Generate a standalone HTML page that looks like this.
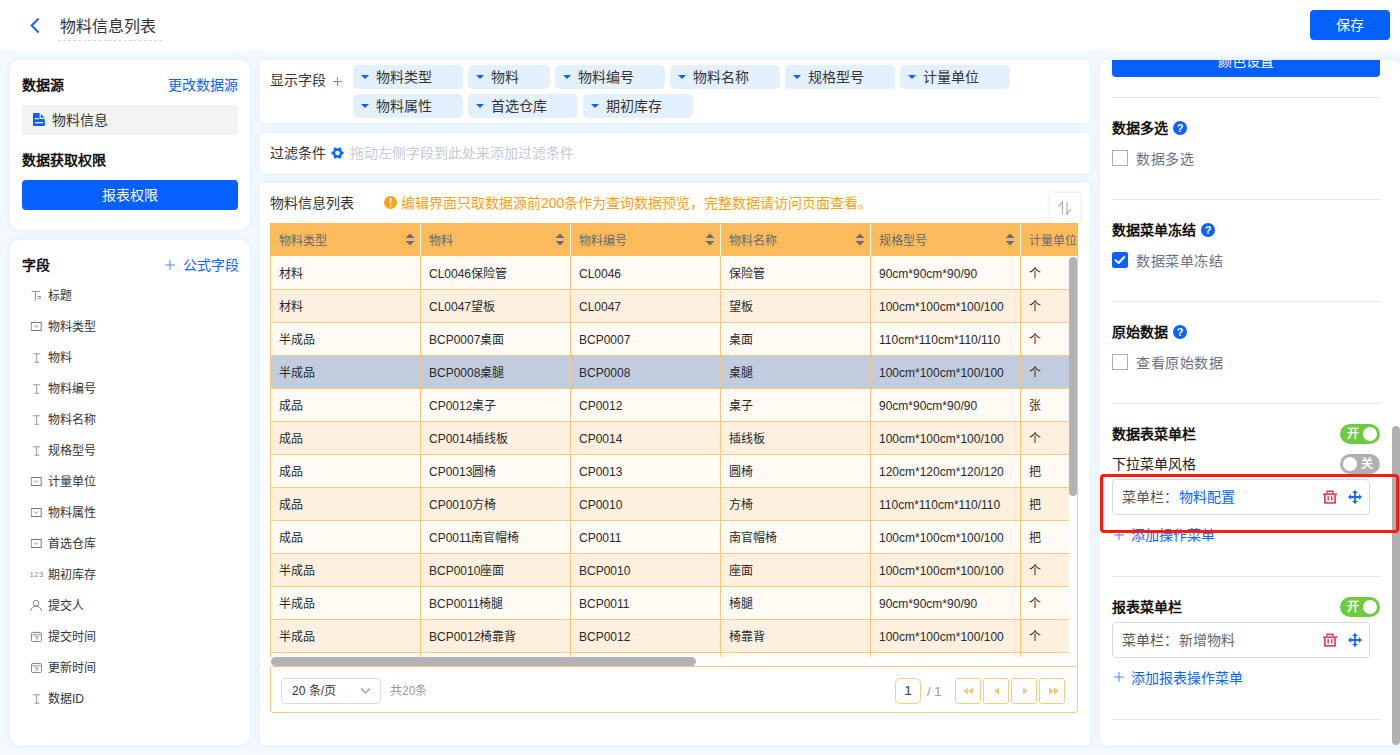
<!DOCTYPE html>
<html lang="zh-CN"><head><meta charset="utf-8">
<style>
*{box-sizing:border-box;margin:0;padding:0}
html,body{width:1400px;height:755px;overflow:hidden}
body{font-family:"Liberation Sans",sans-serif;background:#F4F9FE;color:#333;position:relative;font-size:13px}
.abs{position:absolute}
.hdr{left:0;top:0;width:1400px;height:50px;background:#fff}
.panel{position:absolute;background:#fff;border-radius:10px;box-shadow:0 0 6px rgba(150,205,255,.3)}
.t{position:absolute;white-space:nowrap;line-height:1}
.blue{color:#0B63FF}
.btn{position:absolute;background:#0560FF;border-radius:4px;color:#fff;text-align:center}
/* table */
.tbl{position:absolute;left:270px;top:223px;width:808px;height:490px;overflow:hidden}
.th{position:absolute;top:0;height:33px;background:#FBBB5A}
.cell{position:absolute;white-space:nowrap;font-size:12px;line-height:1}
.row{position:absolute;left:0;width:799px;height:33px;border-bottom:1px solid #F8C97F}
.vl{position:absolute;width:1px;background:#F8C97F}
.tag{position:absolute;height:24px;background:#E3F1FE;border-radius:5px}
.tag i{position:absolute;left:8px;top:10px;width:0;height:0;border-left:4px solid transparent;border-right:4px solid transparent;border-top:4.5px solid #0F5FFF}
.tag span{position:absolute;left:23px;top:5px;font-size:14px;line-height:1;color:#333;white-space:nowrap}
.fi{position:absolute;left:48px;font-size:12px;line-height:1;color:#333;white-space:nowrap}
.ic{position:absolute;left:31px}
.div{position:absolute;left:1112px;width:268px;height:1px;background:#E6E6E6}
.sec{position:absolute;left:1112px;font-size:14px;font-weight:bold;color:#111;line-height:1;white-space:nowrap}
.q{position:absolute;width:14px;height:14px;border-radius:50%;background:#0B62FF;color:#fff;font-size:11px;font-weight:bold;text-align:center;line-height:14px}
.cb{position:absolute;left:1112px;width:16px;height:16px;border:1px solid #A9ADBA;border-radius:0;background:#fff}
.cbl{position:absolute;left:1136px;font-size:14px;letter-spacing:0.6px;color:#6A7282;line-height:1;white-space:nowrap}
.tog{position:absolute;left:1340px;width:40px;height:20px;border-radius:10px}
.menu{position:absolute;left:1112px;width:258px;height:36px;border:1px solid #D9D9D9;border-radius:4px;background:#fff}
.pbtn{position:absolute;top:678px;width:26px;height:26px;border:1px solid #FACB84;border-radius:3px;background:#fff}
</style></head><body>

<!-- header -->
<div class="abs hdr"></div>
<svg class="abs" style="left:28px;top:17px" width="14" height="17" viewBox="0 0 14 17"><path d="M10.6 1.6 L3.7 8.5 L10.6 15.4" fill="none" stroke="#1F62FF" stroke-width="2.1"/></svg>
<div class="t" style="left:60px;top:18.5px;font-size:16px;color:#333">物料信息列表</div>
<div class="abs" style="left:58px;top:40px;width:104px;height:0;border-top:1px dashed #D6D6D6"></div>
<div class="btn" style="left:1310px;top:10px;width:80px;height:30px;font-size:14px;line-height:30px">保存</div>

<!-- left panel 1 -->
<div class="panel" style="left:10px;top:60px;width:240px;height:170px"></div>
<div class="t" style="left:22px;top:78px;font-size:14px;font-weight:bold;color:#111">数据源</div>
<div class="t blue" style="left:168px;top:78px;font-size:14px">更改数据源</div>
<div class="abs" style="left:22px;top:105px;width:216px;height:30px;background:#F3F3F3;border-radius:2px"></div>
<svg class="abs" style="left:33px;top:113px" width="12" height="13" viewBox="0 0 12 13"><path d="M0.4 0H6.6V5.9H11.8V12.6Q11.8 13 11.4 13H0.4Q0 13 0 12.6V0.4Q0 0 0.4 0Z" fill="#0B5FFF"/><path d="M7.9 0.9L11.5 4.7H7.9Z" fill="#0B5FFF"/><rect x="1.8" y="5.1" width="3.9" height="1.2" fill="#fff"/><rect x="1.8" y="9.1" width="8.2" height="1.2" fill="#fff"/></svg>
<div class="t" style="left:52px;top:113px;font-size:14px;color:#333">物料信息</div>
<div class="t" style="left:22px;top:153px;font-size:14px;font-weight:bold;color:#111">数据获取权限</div>
<div class="btn" style="left:22px;top:180px;width:216px;height:30px;font-size:14px;line-height:30px">报表权限</div>

<!-- left panel 2 -->
<div class="panel" style="left:10px;top:240px;width:240px;height:505px"></div>
<div class="t" style="left:22px;top:258px;font-size:14px;font-weight:bold;color:#111">字段</div>
<svg class="abs" style="left:165px;top:260px" width="10" height="10" viewBox="0 0 10 10"><path d="M5 0V10M0 5H10" stroke="#4F7FFF" stroke-width="1"/></svg>
<div class="t blue" style="left:183px;top:258px;font-size:14px">公式字段</div>
<svg class="ic" style="top:289px" width="12" height="13" viewBox="0 0 12 13"><path d="M0.6 2.4H9M4.4 2.4V12M6.6 7.5H10M6.6 9.4H10" fill="none" stroke="#8C8C8C" stroke-width="1"/></svg>
<div class="fi" style="top:290px">标题</div>
<svg class="ic" style="top:320px" width="12" height="13" viewBox="0 0 12 13"><rect x="0.2" y="2.5" width="10" height="8" fill="none" stroke="#777" stroke-width="1"/><path d="M3.4 5.4L5.2 7.4L7 5.4" fill="none" stroke="#888" stroke-width="0.9"/></svg>
<div class="fi" style="top:321px">物料类型</div>
<svg class="ic" style="top:351px" width="12" height="13" viewBox="0 0 12 13"><path d="M1.9 2.8H9.2M5.6 2.8V11.3M3.4 11.3H8.1" fill="none" stroke="#999" stroke-width="1"/></svg>
<div class="fi" style="top:352px">物料</div>
<svg class="ic" style="top:382px" width="12" height="13" viewBox="0 0 12 13"><path d="M1.9 2.8H9.2M5.6 2.8V11.3M3.4 11.3H8.1" fill="none" stroke="#999" stroke-width="1"/></svg>
<div class="fi" style="top:383px">物料编号</div>
<svg class="ic" style="top:413px" width="12" height="13" viewBox="0 0 12 13"><path d="M1.9 2.8H9.2M5.6 2.8V11.3M3.4 11.3H8.1" fill="none" stroke="#999" stroke-width="1"/></svg>
<div class="fi" style="top:414px">物料名称</div>
<svg class="ic" style="top:444px" width="12" height="13" viewBox="0 0 12 13"><path d="M1.9 2.8H9.2M5.6 2.8V11.3M3.4 11.3H8.1" fill="none" stroke="#999" stroke-width="1"/></svg>
<div class="fi" style="top:445px">规格型号</div>
<svg class="ic" style="top:475px" width="12" height="13" viewBox="0 0 12 13"><rect x="0.2" y="2.5" width="10" height="8" fill="none" stroke="#777" stroke-width="1"/><path d="M3.4 5.4L5.2 7.4L7 5.4" fill="none" stroke="#888" stroke-width="0.9"/></svg>
<div class="fi" style="top:476px">计量单位</div>
<svg class="ic" style="top:506px" width="12" height="13" viewBox="0 0 12 13"><rect x="0.2" y="2.5" width="10" height="8" fill="none" stroke="#777" stroke-width="1"/><path d="M3.4 5.4L5.2 7.4L7 5.4" fill="none" stroke="#888" stroke-width="0.9"/></svg>
<div class="fi" style="top:507px">物料属性</div>
<svg class="ic" style="top:537px" width="12" height="13" viewBox="0 0 12 13"><rect x="0.2" y="2.5" width="10" height="8" fill="none" stroke="#777" stroke-width="1"/><path d="M3.4 5.4L5.2 7.4L7 5.4" fill="none" stroke="#888" stroke-width="0.9"/></svg>
<div class="fi" style="top:538px">首选仓库</div>
<div class="t" style="left:29.5px;top:570.5px;font-size:8px;color:#8A8A8A;letter-spacing:0.3px">123</div>
<div class="fi" style="top:569px">期初库存</div>
<svg class="ic" style="top:599px;overflow:visible" width="12" height="13" viewBox="0 0 12 13"><circle cx="5.1" cy="4.2" r="2.8" fill="none" stroke="#8A8A8A" stroke-width="1"/><path d="M-0.4 12C0.2 8.8 2.4 7.3 5.1 7.3C7.8 7.3 10 8.8 10.6 12" fill="none" stroke="#8A8A8A" stroke-width="1"/></svg>
<div class="fi" style="top:600px">提交人</div>
<svg class="ic" style="top:630px" width="12" height="13" viewBox="0 0 12 13"><rect x="0.5" y="2.5" width="10" height="9" rx="1.2" fill="none" stroke="#8A8A8A" stroke-width="1"/><path d="M0.5 4.8H10.5M3 1.6V3.2M8 1.6V3.2M3.8 6.8H6.9L5.2 10.4" fill="none" stroke="#8A8A8A" stroke-width="0.9"/></svg>
<div class="fi" style="top:631px">提交时间</div>
<svg class="ic" style="top:661px" width="12" height="13" viewBox="0 0 12 13"><rect x="0.5" y="2.5" width="10" height="9" rx="1.2" fill="none" stroke="#8A8A8A" stroke-width="1"/><path d="M0.5 4.8H10.5M3 1.6V3.2M8 1.6V3.2M3.8 6.8H6.9L5.2 10.4" fill="none" stroke="#8A8A8A" stroke-width="0.9"/></svg>
<div class="fi" style="top:662px">更新时间</div>
<svg class="ic" style="top:692px" width="12" height="13" viewBox="0 0 12 13"><path d="M1.9 2.8H9.2M5.6 2.8V11.3M3.4 11.3H8.1" fill="none" stroke="#999" stroke-width="1"/></svg>
<div class="fi" style="top:693px">数据ID</div>

<!-- display fields panel -->
<div class="panel" style="left:260px;top:60px;width:830px;height:63px;border-radius:4px"></div>
<div class="t" style="left:270px;top:73px;font-size:14px;color:#333">显示字段</div>
<svg class="abs" style="left:332.5px;top:76.5px" width="9" height="9" viewBox="0 0 9 9"><path d="M4.5 0V9M0 4.5H9" stroke="#8A8A8A" stroke-width="1.1"/></svg>
<div class="tag" style="left:353px;top:65px;width:110px"><i></i><span>物料类型</span></div>
<div class="tag" style="left:468px;top:65px;width:82px"><i></i><span>物料</span></div>
<div class="tag" style="left:555px;top:65px;width:110px"><i></i><span>物料编号</span></div>
<div class="tag" style="left:670px;top:65px;width:110px"><i></i><span>物料名称</span></div>
<div class="tag" style="left:785px;top:65px;width:110px"><i></i><span>规格型号</span></div>
<div class="tag" style="left:900px;top:65px;width:110px"><i></i><span>计量单位</span></div>
<div class="tag" style="left:353px;top:94px;width:110px"><i></i><span>物料属性</span></div>
<div class="tag" style="left:468px;top:94px;width:110px"><i></i><span>首选仓库</span></div>
<div class="tag" style="left:583px;top:94px;width:110px"><i></i><span>期初库存</span></div>

<!-- filter panel -->
<div class="panel" style="left:260px;top:133px;width:830px;height:40px;border-radius:4px"></div>
<div class="t" style="left:270px;top:146px;font-size:14px;color:#333">过滤条件</div>
<svg class="abs" style="left:331px;top:147px" width="13" height="12" viewBox="-6.5 -6 13 12" overflow="visible"><g fill="#1366FF" transform="rotate(30)"><circle r="4.6"/><g id="gt"><rect x="-1.6" y="-6" width="3.2" height="3" rx="0.8"/></g><rect x="-1.6" y="-6" width="3.2" height="3" rx="0.8" transform="rotate(60)"/><rect x="-1.6" y="-6" width="3.2" height="3" rx="0.8" transform="rotate(120)"/><rect x="-1.6" y="-6" width="3.2" height="3" rx="0.8" transform="rotate(180)"/><rect x="-1.6" y="-6" width="3.2" height="3" rx="0.8" transform="rotate(240)"/><rect x="-1.6" y="-6" width="3.2" height="3" rx="0.8" transform="rotate(300)"/></g><circle r="2.3" fill="#fff"/></svg>
<div class="t" style="left:350px;top:146px;font-size:14px;color:#C5CAD3">拖动左侧字段到此处来添加过滤条件</div>

<!-- table panel -->
<div class="panel" style="left:260px;top:183px;width:830px;height:562px;border-radius:4px"></div>
<div class="t" style="left:270px;top:196px;font-size:14px;color:#333">物料信息列表</div>
<svg class="abs" style="left:384px;top:196px" width="13" height="13" viewBox="0 0 13 13"><circle cx="6.5" cy="6.5" r="6.5" fill="#F9A20C"/><path d="M5.5 2.2H7.5L7 8.6H6Z" fill="#fff"/><rect x="5.8" y="9.6" width="1.4" height="1.5" fill="#fff"/></svg>
<div class="t" style="left:401px;top:196px;font-size:14px;color:#F8A114">编辑界面只取数据源前200条作为查询数据预览，完整数据请访问页面查看。</div>
<div class="abs" style="left:1050px;top:193px;width:30px;height:30px;background:#fff;box-shadow:0 0 4px rgba(0,0,0,.12)"></div>
<svg class="abs" style="left:1050px;top:193px" width="30" height="30" viewBox="0 0 30 30"><path d="M8.3 13.3L12.5 9V21.2M17 9V21.2L20.7 16.2" fill="none" stroke="#A8A8A8" stroke-width="1.1"/></svg>

<div class="abs" style="left:270px;top:223px;width:808px;height:33px;background:#FBBB5A"></div>
<div class="cell" style="left:279px;top:235px;color:#646A76">物料类型</div>
<svg class="abs" style="left:405px;top:233px" width="10" height="13" viewBox="0 0 10 13"><path d="M5 0.5L9.5 5H0.5Z M0.5 8H9.5L5 12.5Z" fill="#5F6E86"/></svg>
<div class="cell" style="left:429px;top:235px;color:#646A76">物料</div>
<svg class="abs" style="left:555px;top:233px" width="10" height="13" viewBox="0 0 10 13"><path d="M5 0.5L9.5 5H0.5Z M0.5 8H9.5L5 12.5Z" fill="#5F6E86"/></svg>
<div class="abs" style="left:420px;top:224px;width:1px;height:32px;background:#FFF8EE"></div>
<div class="cell" style="left:579px;top:235px;color:#646A76">物料编号</div>
<svg class="abs" style="left:705px;top:233px" width="10" height="13" viewBox="0 0 10 13"><path d="M5 0.5L9.5 5H0.5Z M0.5 8H9.5L5 12.5Z" fill="#5F6E86"/></svg>
<div class="abs" style="left:570px;top:224px;width:1px;height:32px;background:#FFF8EE"></div>
<div class="cell" style="left:729px;top:235px;color:#646A76">物料名称</div>
<svg class="abs" style="left:855px;top:233px" width="10" height="13" viewBox="0 0 10 13"><path d="M5 0.5L9.5 5H0.5Z M0.5 8H9.5L5 12.5Z" fill="#5F6E86"/></svg>
<div class="abs" style="left:720px;top:224px;width:1px;height:32px;background:#FFF8EE"></div>
<div class="cell" style="left:879px;top:235px;color:#646A76">规格型号</div>
<svg class="abs" style="left:1005px;top:233px" width="10" height="13" viewBox="0 0 10 13"><path d="M5 0.5L9.5 5H0.5Z M0.5 8H9.5L5 12.5Z" fill="#5F6E86"/></svg>
<div class="abs" style="left:870px;top:224px;width:1px;height:32px;background:#FFF8EE"></div>
<div class="cell" style="left:1029px;top:235px;color:#646A76">计量单位</div>
<div class="abs" style="left:1020px;top:224px;width:1px;height:32px;background:#FFF8EE"></div>
<div class="abs" style="left:270px;top:257px;width:799px;height:33px;background:#FFFBF4;border-bottom:1px solid #F8C97F"></div>
<div class="cell" style="left:279px;top:268px;color:#282828">材料</div>
<div class="cell" style="left:429px;top:268px;color:#282828">CL0046保险管</div>
<div class="cell" style="left:579px;top:268px;color:#282828">CL0046</div>
<div class="cell" style="left:729px;top:268px;color:#282828">保险管</div>
<div class="cell" style="left:879px;top:268px;color:#282828">90cm*90cm*90/90</div>
<div class="cell" style="left:1029px;top:268px;color:#282828">个</div>
<div class="abs" style="left:270px;top:290px;width:799px;height:33px;background:#FDF0DF;border-bottom:1px solid #F8C97F"></div>
<div class="cell" style="left:279px;top:301px;color:#282828">材料</div>
<div class="cell" style="left:429px;top:301px;color:#282828">CL0047望板</div>
<div class="cell" style="left:579px;top:301px;color:#282828">CL0047</div>
<div class="cell" style="left:729px;top:301px;color:#282828">望板</div>
<div class="cell" style="left:879px;top:301px;color:#282828">100cm*100cm*100/100</div>
<div class="cell" style="left:1029px;top:301px;color:#282828">个</div>
<div class="abs" style="left:270px;top:323px;width:799px;height:33px;background:#FFFBF4;border-bottom:1px solid #F8C97F"></div>
<div class="cell" style="left:279px;top:334px;color:#282828">半成品</div>
<div class="cell" style="left:429px;top:334px;color:#282828">BCP0007桌面</div>
<div class="cell" style="left:579px;top:334px;color:#282828">BCP0007</div>
<div class="cell" style="left:729px;top:334px;color:#282828">桌面</div>
<div class="cell" style="left:879px;top:334px;color:#282828">110cm*110cm*110/110</div>
<div class="cell" style="left:1029px;top:334px;color:#282828">个</div>
<div class="abs" style="left:270px;top:356px;width:799px;height:33px;background:#C2CCDF;border-bottom:1px solid #F8C97F"></div>
<div class="cell" style="left:279px;top:367px;color:#282828">半成品</div>
<div class="cell" style="left:429px;top:367px;color:#282828">BCP0008桌腿</div>
<div class="cell" style="left:579px;top:367px;color:#282828">BCP0008</div>
<div class="cell" style="left:729px;top:367px;color:#282828">桌腿</div>
<div class="cell" style="left:879px;top:367px;color:#282828">100cm*100cm*100/100</div>
<div class="cell" style="left:1029px;top:367px;color:#282828">个</div>
<div class="abs" style="left:270px;top:389px;width:799px;height:33px;background:#FFFBF4;border-bottom:1px solid #F8C97F"></div>
<div class="cell" style="left:279px;top:400px;color:#282828">成品</div>
<div class="cell" style="left:429px;top:400px;color:#282828">CP0012桌子</div>
<div class="cell" style="left:579px;top:400px;color:#282828">CP0012</div>
<div class="cell" style="left:729px;top:400px;color:#282828">桌子</div>
<div class="cell" style="left:879px;top:400px;color:#282828">90cm*90cm*90/90</div>
<div class="cell" style="left:1029px;top:400px;color:#282828">张</div>
<div class="abs" style="left:270px;top:422px;width:799px;height:33px;background:#FDF0DF;border-bottom:1px solid #F8C97F"></div>
<div class="cell" style="left:279px;top:433px;color:#282828">成品</div>
<div class="cell" style="left:429px;top:433px;color:#282828">CP0014插线板</div>
<div class="cell" style="left:579px;top:433px;color:#282828">CP0014</div>
<div class="cell" style="left:729px;top:433px;color:#282828">插线板</div>
<div class="cell" style="left:879px;top:433px;color:#282828">100cm*100cm*100/100</div>
<div class="cell" style="left:1029px;top:433px;color:#282828">个</div>
<div class="abs" style="left:270px;top:455px;width:799px;height:33px;background:#FFFBF4;border-bottom:1px solid #F8C97F"></div>
<div class="cell" style="left:279px;top:466px;color:#282828">成品</div>
<div class="cell" style="left:429px;top:466px;color:#282828">CP0013圆椅</div>
<div class="cell" style="left:579px;top:466px;color:#282828">CP0013</div>
<div class="cell" style="left:729px;top:466px;color:#282828">圆椅</div>
<div class="cell" style="left:879px;top:466px;color:#282828">120cm*120cm*120/120</div>
<div class="cell" style="left:1029px;top:466px;color:#282828">把</div>
<div class="abs" style="left:270px;top:488px;width:799px;height:33px;background:#FDF0DF;border-bottom:1px solid #F8C97F"></div>
<div class="cell" style="left:279px;top:499px;color:#282828">成品</div>
<div class="cell" style="left:429px;top:499px;color:#282828">CP0010方椅</div>
<div class="cell" style="left:579px;top:499px;color:#282828">CP0010</div>
<div class="cell" style="left:729px;top:499px;color:#282828">方椅</div>
<div class="cell" style="left:879px;top:499px;color:#282828">110cm*110cm*110/110</div>
<div class="cell" style="left:1029px;top:499px;color:#282828">把</div>
<div class="abs" style="left:270px;top:521px;width:799px;height:33px;background:#FFFBF4;border-bottom:1px solid #F8C97F"></div>
<div class="cell" style="left:279px;top:532px;color:#282828">成品</div>
<div class="cell" style="left:429px;top:532px;color:#282828">CP0011南官帽椅</div>
<div class="cell" style="left:579px;top:532px;color:#282828">CP0011</div>
<div class="cell" style="left:729px;top:532px;color:#282828">南官帽椅</div>
<div class="cell" style="left:879px;top:532px;color:#282828">100cm*100cm*100/100</div>
<div class="cell" style="left:1029px;top:532px;color:#282828">把</div>
<div class="abs" style="left:270px;top:554px;width:799px;height:33px;background:#FDF0DF;border-bottom:1px solid #F8C97F"></div>
<div class="cell" style="left:279px;top:565px;color:#282828">半成品</div>
<div class="cell" style="left:429px;top:565px;color:#282828">BCP0010座面</div>
<div class="cell" style="left:579px;top:565px;color:#282828">BCP0010</div>
<div class="cell" style="left:729px;top:565px;color:#282828">座面</div>
<div class="cell" style="left:879px;top:565px;color:#282828">100cm*100cm*100/100</div>
<div class="cell" style="left:1029px;top:565px;color:#282828">个</div>
<div class="abs" style="left:270px;top:587px;width:799px;height:33px;background:#FFFBF4;border-bottom:1px solid #F8C97F"></div>
<div class="cell" style="left:279px;top:598px;color:#282828">半成品</div>
<div class="cell" style="left:429px;top:598px;color:#282828">BCP0011椅腿</div>
<div class="cell" style="left:579px;top:598px;color:#282828">BCP0011</div>
<div class="cell" style="left:729px;top:598px;color:#282828">椅腿</div>
<div class="cell" style="left:879px;top:598px;color:#282828">90cm*90cm*90/90</div>
<div class="cell" style="left:1029px;top:598px;color:#282828">个</div>
<div class="abs" style="left:270px;top:620px;width:799px;height:33px;background:#FDF0DF;border-bottom:1px solid #F8C97F"></div>
<div class="cell" style="left:279px;top:631px;color:#282828">半成品</div>
<div class="cell" style="left:429px;top:631px;color:#282828">BCP0012椅靠背</div>
<div class="cell" style="left:579px;top:631px;color:#282828">BCP0012</div>
<div class="cell" style="left:729px;top:631px;color:#282828">椅靠背</div>
<div class="cell" style="left:879px;top:631px;color:#282828">100cm*100cm*100/100</div>
<div class="cell" style="left:1029px;top:631px;color:#282828">个</div>
<div class="abs" style="left:270px;top:653px;width:799px;height:4px;background:#FFFBF4"></div>
<div class="abs" style="left:270px;top:256px;width:799px;height:1px;background:#FFFBF4"></div>
<div class="abs" style="left:270px;top:256px;width:1px;height:401px;background:#F8C97F"></div>
<div class="abs" style="left:420px;top:256px;width:1px;height:401px;background:#F8C97F"></div>
<div class="abs" style="left:570px;top:256px;width:1px;height:401px;background:#F8C97F"></div>
<div class="abs" style="left:720px;top:256px;width:1px;height:401px;background:#F8C97F"></div>
<div class="abs" style="left:870px;top:256px;width:1px;height:401px;background:#F8C97F"></div>
<div class="abs" style="left:1020px;top:256px;width:1px;height:401px;background:#F8C97F"></div>
<div class="abs" style="left:1069px;top:256px;width:8px;height:410px;background:#fff"></div>
<div class="abs" style="left:1077px;top:256px;width:1px;height:410px;background:#F8C97F"></div>
<div class="abs" style="left:1069px;top:257px;width:8px;height:239px;background:#B3B3B3;border-radius:4px"></div>
<div class="abs" style="left:271px;top:657px;width:425px;height:9px;background:#B3B3B3;border-radius:4.5px"></div>
<div class="abs" style="left:270px;top:666px;width:808px;height:47px;border:1px solid #F8C97F;border-radius:0 0 3px 3px;background:#fff"></div>
<div class="abs" style="left:281px;top:678px;width:100px;height:26px;border:1px solid #DCDCDC;border-radius:4px"></div>
<div class="cell" style="left:292px;top:685px;font-size:12px;color:#333">20 条/页</div>
<svg class="abs" style="left:360px;top:687px" width="11" height="8" viewBox="0 0 11 8"><path d="M1 1.5L5.5 6L10 1.5" fill="none" stroke="#999" stroke-width="1.2"/></svg>
<div class="cell" style="left:390px;top:685px;font-size:12px;color:#999">共20条</div>
<div class="abs" style="left:895px;top:678px;width:26px;height:26px;border:1px solid #FACB84;border-radius:5px;text-align:center;line-height:24px;font-size:13px;color:#333">1</div>
<div class="cell" style="left:927px;top:685px;font-size:13px;color:#999">/ 1</div>
<div class="pbtn" style="left:955px"><svg class="abs" style="left:0;top:4px" width="26" height="16" viewBox="0 0 26 16"><path d="M7 8L12 4.5V11.5Z M12 8L17 4.5V11.5Z" fill="#FBC57A"/></svg></div>
<div class="pbtn" style="left:983px"><svg class="abs" style="left:0;top:4px" width="26" height="16" viewBox="0 0 26 16"><path d="M10 8L15 4.5V11.5Z" fill="#FBC57A"/></svg></div>
<div class="pbtn" style="left:1011px"><svg class="abs" style="left:0;top:4px" width="26" height="16" viewBox="0 0 26 16"><path d="M16 8L11 4.5V11.5Z" fill="#FBC57A"/></svg></div>
<div class="pbtn" style="left:1039px"><svg class="abs" style="left:0;top:4px" width="26" height="16" viewBox="0 0 26 16"><path d="M14 8L9 4.5V11.5Z M19 8L14 4.5V11.5Z" fill="#FBC57A"/></svg></div>

<!-- right panel -->
<div class="panel" style="left:1100px;top:60px;width:300px;height:685px;border-radius:8px 8px 0 8px;overflow:hidden"><div class="btn" style="left:12px;top:-14px;width:268px;height:31px;font-size:14px;line-height:30px;border-radius:0 0 4px 4px;background:#0660FF">颜色设置</div></div>
<div class="div" style="top:97px"></div>
<div class="sec" style="top:121px">数据多选</div>
<div class="q" style="left:1173px;top:121px">?</div>
<div class="cb" style="top:150px"></div>
<div class="cbl" style="top:152px">数据多选</div>
<div class="div" style="top:199px"></div>
<div class="sec" style="top:223px">数据菜单冻结</div>
<div class="q" style="left:1201px;top:223px">?</div>
<div class="cb" style="top:252px;background:#0B62FF;border-color:#0B62FF;border-radius:2px"><svg width="14" height="14" viewBox="0 0 14 14" style="position:absolute;left:0;top:0"><path d="M2.6 7.2L5.6 10L11.2 4" fill="none" stroke="#fff" stroke-width="2.1" stroke-linecap="round" stroke-linejoin="round"/></svg></div>
<div class="cbl" style="top:254px">数据菜单冻结</div>
<div class="div" style="top:301px"></div>
<div class="sec" style="top:325px">原始数据</div>
<div class="q" style="left:1173px;top:325px">?</div>
<div class="cb" style="top:354px"></div>
<div class="cbl" style="top:356px">查看原始数据</div>
<div class="div" style="top:403px"></div>
<div class="sec" style="top:427px">数据表菜单栏</div>
<div class="tog" style="top:424px;background:#6DCB3E"><span class="t" style="left:7px;top:4px;font-size:12px;color:#fff;font-weight:bold">开</span><i class="abs" style="right:3px;top:3px;width:14px;height:14px;border-radius:50%;background:#fff"></i></div>
<div class="t" style="left:1112px;top:457px;font-size:14px;color:#222">下拉菜单风格</div>
<div class="tog" style="top:454px;background:#B0B0B0"><i class="abs" style="left:3px;top:3px;width:14px;height:14px;border-radius:50%;background:#fff"></i><span class="t" style="left:21px;top:4px;font-size:12px;color:#fff;font-weight:bold">关</span></div>
<div class="menu" style="top:479px"></div>
<svg class="abs" style="left:1323px;top:490px" width="14" height="14" viewBox="0 0 14 14"><path d="M4 3.8V1.2H10V3.8" fill="none" stroke="#E5475A" stroke-width="1.6"/><path d="M0 4.2H14" stroke="#E5475A" stroke-width="1.8"/><path d="M1.9 5V12.9H12.1V5" fill="none" stroke="#E5475A" stroke-width="1.8"/><path d="M5.2 6.2V10.6M8.8 6.2V10.6" stroke="#E5475A" stroke-width="1.6"/></svg><svg class="abs" style="left:1348px;top:490px" width="14" height="14" viewBox="0 0 14 14"><path d="M7 1.5V12.5M1.5 7H12.5" stroke="#1366FF" stroke-width="1.8"/><path d="M7 0L9.8 3H4.2Z M7 14L9.8 11H4.2Z M0 7L3 4.2V9.8Z M14 7L11 4.2V9.8Z" fill="#1366FF"/></svg>
<div class="t" style="left:1122px;top:490px;font-size:14px;color:#555">菜单栏：</div>
<div class="t blue" style="left:1179px;top:490px;font-size:14px">物料配置</div>
<svg class="abs" style="left:1114px;top:530px" width="10" height="10" viewBox="0 0 10 10"><path d="M5 0V10M0 5H10" stroke="#4F7FFF" stroke-width="1"/></svg>
<div class="t blue" style="left:1131px;top:528px;font-size:14px">添加操作菜单</div>
<div class="div" style="top:576px"></div>
<div class="sec" style="top:600px">报表菜单栏</div>
<div class="tog" style="top:597px;background:#6DCB3E"><span class="t" style="left:7px;top:4px;font-size:12px;color:#fff;font-weight:bold">开</span><i class="abs" style="right:3px;top:3px;width:14px;height:14px;border-radius:50%;background:#fff"></i></div>
<div class="menu" style="top:622px"></div>
<svg class="abs" style="left:1323px;top:633px" width="14" height="14" viewBox="0 0 14 14"><path d="M4 3.8V1.2H10V3.8" fill="none" stroke="#E5475A" stroke-width="1.6"/><path d="M0 4.2H14" stroke="#E5475A" stroke-width="1.8"/><path d="M1.9 5V12.9H12.1V5" fill="none" stroke="#E5475A" stroke-width="1.8"/><path d="M5.2 6.2V10.6M8.8 6.2V10.6" stroke="#E5475A" stroke-width="1.6"/></svg><svg class="abs" style="left:1348px;top:633px" width="14" height="14" viewBox="0 0 14 14"><path d="M7 1.5V12.5M1.5 7H12.5" stroke="#1366FF" stroke-width="1.8"/><path d="M7 0L9.8 3H4.2Z M7 14L9.8 11H4.2Z M0 7L3 4.2V9.8Z M14 7L11 4.2V9.8Z" fill="#1366FF"/></svg>
<div class="t" style="left:1122px;top:633px;font-size:14px;color:#555">菜单栏：</div>
<div class="t" style="left:1179px;top:633px;font-size:14px;color:#666">新增物料</div>
<svg class="abs" style="left:1114px;top:672px" width="10" height="10" viewBox="0 0 10 10"><path d="M5 0V10M0 5H10" stroke="#4F7FFF" stroke-width="1"/></svg>
<div class="t blue" style="left:1131px;top:671px;font-size:14px">添加报表操作菜单</div>
<div class="div" style="top:719px"></div>
<div class="abs" style="left:1392px;top:426px;width:8px;height:319px;background:#B0B0B0;border-radius:4px"></div>

<div class="abs" style="left:1100px;top:474px;width:299px;height:59px;border:3px solid #FF1A10;border-radius:4px"></div>
</body></html>
